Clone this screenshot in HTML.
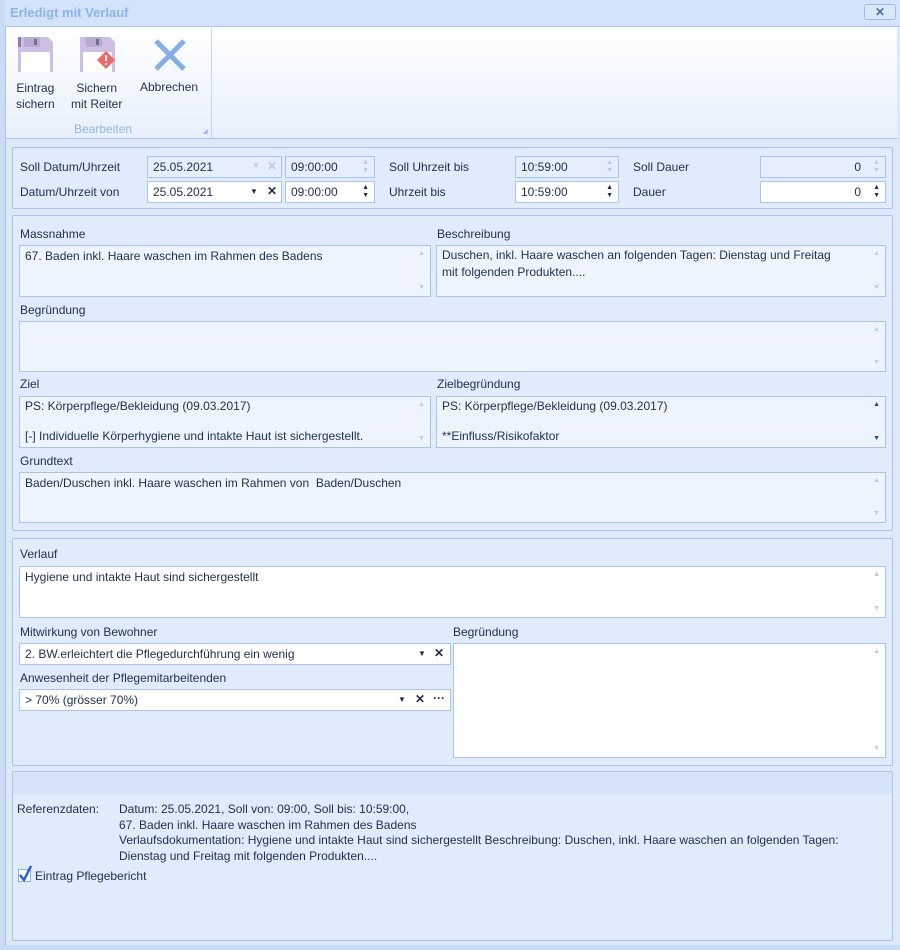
<!DOCTYPE html>
<html><head><meta charset="utf-8"><style>
*{box-sizing:border-box;margin:0;padding:0}
body{width:900px;height:950px;overflow:hidden;background:#dde8f8;font-family:"Liberation Sans",sans-serif;font-size:12px;color:#1e2f4d;position:relative}
.a{position:absolute}
.t{position:absolute;white-space:nowrap}
.panel{position:absolute;border:1px solid #a9c4ee;background:#e0ebfb;border-radius:2px}
.in{position:absolute;border:1px solid #a9c4ee;background:#fff;padding:3px 5px;white-space:nowrap}
.ro{background:#eef4fe}
.dis{background:#e6eefb}
.sc{position:absolute;right:5px;color:#b8cae6;font-size:7px;line-height:8px}
.arr{position:absolute;font-size:8px;color:#1e2f4d}
</style></head><body>
<div class="a" style="left:0;top:0;width:5px;height:950px;background:#c9dbf5"></div>
<div class="a" style="left:5px;top:0;width:1px;height:950px;background:#a9c4ee"></div>
<div class="a" style="left:5px;top:0;width:895px;height:27px;background:#d3e3f9;border-bottom:1px solid #a9c4ee"></div>
<div class="t" style="left:10px;top:5px;font-weight:bold;font-size:13px;color:#8db3ec">Erledigt mit Verlauf</div>
<div class="a" style="left:864px;top:4px;width:32px;height:16px;border:1px solid #9ebce8;border-radius:3px;background:#dbe8fb;color:#4a6fa8;font-weight:bold;text-align:center;font-size:12px;line-height:14px">✕</div>
<div class="a" style="left:6px;top:27px;width:891px;height:112px;background:linear-gradient(#fff,#e8f0fc);border-bottom:1px solid #a9c4ee"></div>
<div class="a" style="left:211px;top:28px;width:1px;height:110px;background:#c3d6f2"></div>
<div class="a" style="left:10px;top:117px;width:198px;height:1px;background:#e2ebf8"></div>
<div class="t" style="left:74px;top:122px;color:#8fb4ea">Bearbeiten</div>
<div class="t" style="left:203px;top:128px;font-size:6px;color:#8fb4ea">◢</div>
<svg class="a" style="left:17px;top:36px" width="38" height="37"><path d="M1 1h30l5 5v30H1z" fill="#cdbfe3"/><rect x="7" y="1" width="16" height="10" fill="#b7abcf"/><rect x="17" y="3" width="3" height="6" fill="#6e6f8a"/><rect x="4" y="16" width="29" height="20" fill="#fff"/><rect x="1" y="1" width="3" height="10" fill="#8b7bb0"/></svg>
<svg class="a" style="left:79px;top:36px" width="40" height="37"><path d="M1 1h30l5 5v30H1z" fill="#cdbfe3"/><rect x="7" y="1" width="16" height="10" fill="#b7abcf"/><rect x="17" y="3" width="3" height="6" fill="#6e6f8a"/><rect x="4" y="16" width="29" height="20" fill="#fff"/><path d="M27 15l9 9-9 9-9-9z" fill="#ee6a6a"/><rect x="26" y="19" width="2" height="6" fill="#fff"/><rect x="26" y="27" width="2" height="2" fill="#fff"/></svg>
<svg class="a" style="left:153px;top:38px" width="34" height="34"><path d="M3 3L31 31M31 3L3 31" stroke="#86aee6" stroke-width="5"/></svg>
<div class="t" style="left:16px;top:80px;line-height:16px;text-align:center;font-size:12px">Eintrag<br>sichern</div>
<div class="t" style="left:71px;top:80px;line-height:16px;text-align:center">Sichern<br>mit Reiter</div>
<div class="t" style="left:140px;top:80px">Abbrechen</div>

<div class="panel" style="left:12px;top:147px;width:881px;height:62px"></div>
<div class="t" style="left:20px;top:160px">Soll Datum/Uhrzeit</div>
<div class="t" style="left:20px;top:185px">Datum/Uhrzeit von</div>
<div class="in dis" style="left:147px;top:156px;width:135px;height:22px">25.05.2021<span class="a" style="left:104px;top:4px;font-size:8px;color:#b8cae6">▼</span><span class="a" style="left:119px;top:2px;color:#b8cae6;font-weight:bold">✕</span></div>
<div class="in dis" style="left:285px;top:156px;width:90px;height:22px">09:00:00<span class="sc" style="top:2px">▲<br>▼</span></div>
<div class="in" style="left:147px;top:181px;width:135px;height:22px">25.05.2021<span class="arr" style="left:102px;top:5px">▼</span><span class="a" style="left:119px;top:2px;font-weight:bold">✕</span></div>
<div class="in" style="left:285px;top:181px;width:90px;height:22px">09:00:00<span class="sc" style="top:2px;color:#1e2f4d">▲<br>▼</span></div>
<div class="t" style="left:389px;top:160px">Soll Uhrzeit bis</div>
<div class="t" style="left:389px;top:185px">Uhrzeit bis</div>
<div class="in dis" style="left:515px;top:156px;width:104px;height:22px">10:59:00<span class="sc" style="top:2px">▲<br>▼</span></div>
<div class="in" style="left:515px;top:181px;width:104px;height:22px">10:59:00<span class="sc" style="top:2px;color:#1e2f4d">▲<br>▼</span></div>
<div class="t" style="left:633px;top:160px">Soll Dauer</div>
<div class="t" style="left:633px;top:185px">Dauer</div>
<div class="in dis" style="left:760px;top:156px;width:126px;height:22px;text-align:right;padding-right:24px">0<span class="sc" style="top:2px">▲<br>▼</span></div>
<div class="in" style="left:760px;top:181px;width:126px;height:22px;text-align:right;padding-right:24px">0<span class="sc" style="top:2px;color:#1e2f4d">▲<br>▼</span></div>

<div class="panel" style="left:12px;top:215px;width:881px;height:316px"></div>
<div class="t" style="left:20px;top:227px">Massnahme</div>
<div class="in ro" style="left:19px;top:245px;width:412px;height:52px">67. Baden inkl. Haare waschen im Rahmen des Badens<span class="sc" style="top:4px">▲</span><span class="sc" style="top:38px">▼</span></div>
<div class="t" style="left:437px;top:227px">Beschreibung</div>
<div class="in ro" style="left:436px;top:245px;width:450px;height:52px;line-height:17px;padding-top:1px">Duschen, inkl. Haare waschen an folgenden Tagen: Dienstag und Freitag<br>mit folgenden Produkten....<span class="sc" style="top:4px">▲</span><span class="sc" style="top:38px">▼</span></div>
<div class="t" style="left:20px;top:303px">Begründung</div>
<div class="in ro" style="left:19px;top:321px;width:867px;height:51px"><span class="sc" style="top:4px">▲</span><span class="sc" style="top:37px">▼</span></div>
<div class="t" style="left:20px;top:377px">Ziel</div>
<div class="in ro" style="left:19px;top:396px;width:412px;height:52px;line-height:15px;padding-top:2px">PS: Körperpflege/Bekleidung (09.03.2017)<br><br>[-] Individuelle Körperhygiene und intakte Haut ist sichergestellt.<span class="sc" style="top:4px">▲</span><span class="sc" style="top:38px">▼</span></div>
<div class="t" style="left:437px;top:377px">Zielbegründung</div>
<div class="in ro" style="left:436px;top:396px;width:450px;height:52px;line-height:15px;padding-top:2px">PS: Körperpflege/Bekleidung (09.03.2017)<br><br>**Einfluss/Risikofaktor<span class="sc" style="top:4px;color:#1e4a8a">▲</span><span class="sc" style="top:38px;color:#1e4a8a">▼</span></div>
<div class="t" style="left:20px;top:454px">Grundtext</div>
<div class="in ro" style="left:19px;top:472px;width:867px;height:51px">Baden/Duschen inkl. Haare waschen im Rahmen von &nbsp;Baden/Duschen<span class="sc" style="top:4px">▲</span><span class="sc" style="top:37px">▼</span></div>

<div class="panel" style="left:12px;top:538px;width:881px;height:228px"></div>
<div class="t" style="left:20px;top:547px">Verlauf</div>
<div class="in" style="left:19px;top:566px;width:867px;height:52px">Hygiene und intakte Haut sind sichergestellt<span class="sc" style="top:4px">▲</span><span class="sc" style="top:38px">▼</span></div>
<div class="t" style="left:20px;top:625px">Mitwirkung von Bewohner</div>
<div class="in" style="left:19px;top:643px;width:432px;height:22px">2. BW.erleichtert die Pflegedurchführung ein wenig<span class="arr" style="left:398px;top:5px">▼</span><span class="a" style="left:414px;top:2px;font-weight:bold">✕</span></div>
<div class="t" style="left:20px;top:671px">Anwesenheit der Pflegemitarbeitenden</div>
<div class="in" style="left:19px;top:689px;width:432px;height:22px">&gt; 70% (grösser 70%)<span class="arr" style="left:378px;top:5px">▼</span><span class="a" style="left:395px;top:2px;font-weight:bold">✕</span><span class="a" style="left:413px;top:1px;font-weight:bold">···</span></div>
<div class="t" style="left:453px;top:625px">Begründung</div>
<div class="in" style="left:453px;top:643px;width:433px;height:115px"><span class="sc" style="top:4px">▲</span><span class="sc" style="top:101px">▼</span></div>

<div class="panel" style="left:12px;top:771px;width:881px;height:170px"></div>
<div class="a" style="left:13px;top:772px;width:879px;height:22px;background:#d5e3f8"></div>
<div class="t" style="left:17px;top:802px">Referenzdaten:</div>
<div class="t" style="left:119px;top:802px;line-height:15.7px">Datum: 25.05.2021, Soll von: 09:00, Soll bis: 10:59:00,<br>67. Baden inkl. Haare waschen im Rahmen des Badens<br>Verlaufsdokumentation: Hygiene und intakte Haut sind sichergestellt Beschreibung: Duschen, inkl. Haare waschen an folgenden Tagen:<br>Dienstag und Freitag mit folgenden Produkten....</div>
<div class="a" style="left:18px;top:869px;width:13px;height:13px;border:1px solid #8fb0e0;background:#fff"></div>
<svg class="a" style="left:17px;top:865px" width="16" height="18"><path d="M3 10l4 5 7-14" stroke="#2a62c8" stroke-width="2.5" fill="none"/></svg>
<div class="t" style="left:35px;top:869px">Eintrag Pflegebericht</div>
<div class="a" style="left:5px;top:945px;width:895px;height:5px;background:#c9dbf5"></div>
</body></html>
